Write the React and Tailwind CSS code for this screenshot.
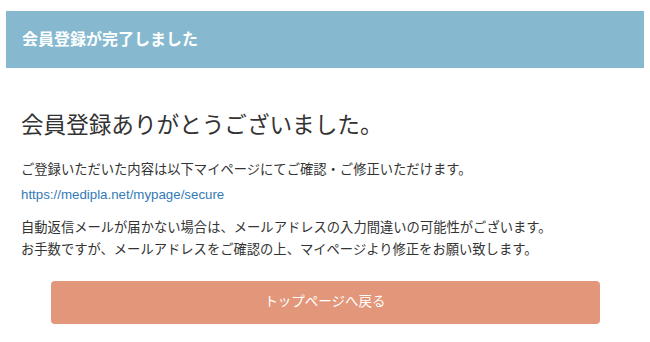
import React from 'react';

const font = { fontFamily: '"Liberation Sans", "Noto Sans CJK JP", sans-serif' };

const App = () => {
  return (
    <div className="min-h-screen bg-white px-[6px] pt-[11px]" style={font}>
      <div className="h-[57px] bg-[#86b9cf] flex items-center px-4">
        <h2 className="text-white font-bold text-[16px] leading-none">会員登録が完了しました</h2>
      </div>

      <div className="px-[15px]">
        <h1 className="mt-[41px] text-[22.6px] leading-[33px] text-[#333]">
          会員登録ありがとうございました。
        </h1>

        <div className="mt-[16px] text-[13.3px] leading-[24px] text-[#333]">
          <p>ご登録いただいた内容は以下マイページにてご確認・ご修正いただけます。</p>
          <a href="#" className="block text-[13.3px] leading-[26px] text-[#337ab7]">
            https://medipla.net/mypage/secure
          </a>
        </div>

        <p className="mt-[9px] text-[13.3px] leading-[22px] text-[#333]">
          自動返信メールが届かない場合は、メールアドレスの入力間違いの可能性がございます。
          <br />
          お手数ですが、メールアドレスをご確認の上、マイページより修正をお願い致します。
        </p>

        <div className="mt-[20px] flex justify-center">
          <a
            href="#"
            className="w-[549px] h-[43px] rounded-[4px] bg-[#e3977a] text-white text-[13.5px] flex items-center justify-center"
          >
            トップページへ戻る
          </a>
        </div>
      </div>
    </div>
  );
};

export default App;
